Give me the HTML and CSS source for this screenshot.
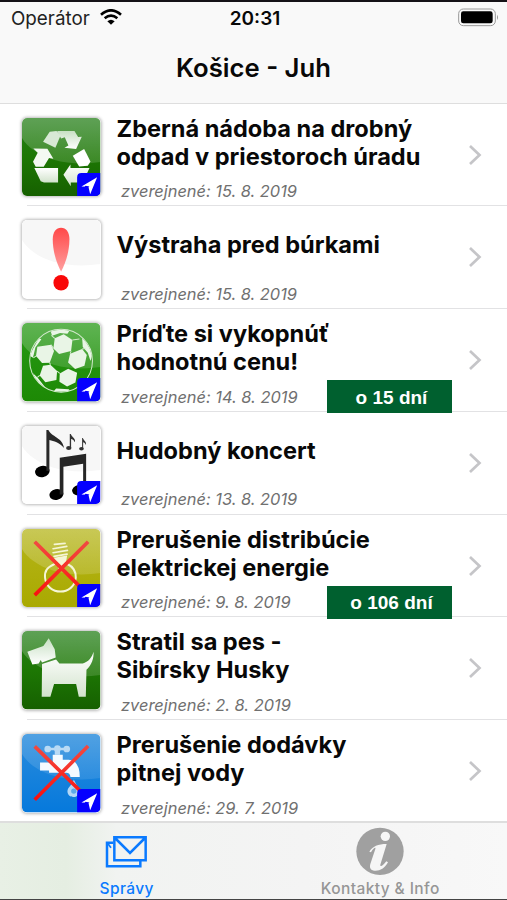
FILE: index.html
```
<!DOCTYPE html>
<html lang="sk">
<head>
<meta charset="utf-8">
<title>Košice - Juh</title>
<link rel="stylesheet" href="styles.css">
</head>
<body>
<svg class="defs" width="0" height="0" aria-hidden="true">
  <defs>
    <linearGradient id="green" x1="0" y1="0" x2="0" y2="1"><stop offset="0" stop-color="#26801a"/><stop offset=".5" stop-color="#1d7704"/><stop offset="1" stop-color="#166000"/></linearGradient>
    <linearGradient id="grass" x1="0" y1="0" x2="0" y2="1"><stop offset="0" stop-color="#279a16"/><stop offset="1" stop-color="#1d8905"/></linearGradient>
    <linearGradient id="olive" x1="0" y1="0" x2="0" y2="1"><stop offset="0" stop-color="#b5b51a"/><stop offset="1" stop-color="#a9a900"/></linearGradient>
    <linearGradient id="blue" x1="0" y1="0" x2="0" y2="1"><stop offset="0" stop-color="#2a8cdc"/><stop offset="1" stop-color="#0679dc"/></linearGradient>
    <linearGradient id="shine" x1="0" y1="0" x2="0" y2="1"><stop offset="0" stop-color="#fff" stop-opacity=".26"/><stop offset="1" stop-color="#fff" stop-opacity=".14"/></linearGradient>
    <linearGradient id="glyph" x1="0" y1="0" x2="0" y2="1"><stop offset="0" stop-color="#c8e0c4"/><stop offset="1" stop-color="#fff"/></linearGradient>
    <linearGradient id="glyph2" x1="0" y1="0" x2="0" y2="1"><stop offset="0" stop-color="#fff"/><stop offset="1" stop-color="#d2e3cc"/></linearGradient>
    <linearGradient id="warn" x1="0" y1="0" x2="0" y2="1"><stop offset="0" stop-color="#ff4848"/><stop offset="1" stop-color="#ffa0a0"/></linearGradient>
    <linearGradient id="cross" gradientUnits="userSpaceOnUse" x1="0" y1="68" x2="0" y2="230"><stop offset="0" stop-color="#f04a42"/><stop offset=".5" stop-color="#f83028"/><stop offset="1" stop-color="#f81010"/></linearGradient>
    <clipPath id="tile"><rect width="235" height="235" rx="15"/></clipPath>
    <clipPath id="ball"><circle cx="153" cy="149" r="93"/></clipPath>
    <path id="gloss" d="M0 0H235V132C190 138 140 138 95 125C45 110 15 85 0 60Z"/>
    <g id="loc">
      <path d="M165 235V178Q165 165 178 165H235V235Z" fill="#0500ff"/>
      <path d="M225 177L178 205L199 206L204 228Z" fill="#fff"/>
      <path d="M202 205L180 217L190 203Z" fill="#0500ff"/>
    </g>
  </defs>
</svg>
<div class="screen">
  <header class="top">
    <div class="status">
      <div class="carrier"><span>Operátor</span>
        <svg width="22" height="16" viewBox="0 0 66 48"><g fill="none" stroke="#000" stroke-width="8"><path d="M3 17Q33 -9 63 17"/><path d="M14 28Q33 12 52 28"/></g><path d="M33 47L22 37Q33 28 44 37Z"/></svg>
      </div>
      <div class="clock">20:31</div>
      <svg class="battery" width="41" height="19" viewBox="0 0 123 57"><rect x="2" y="3" width="110" height="50" rx="14" fill="none" stroke="#999" stroke-width="3"/><rect x="9" y="10" width="95" height="36" rx="7"/><path d="M117 20Q123 28 117 36Z" fill="#999"/></svg>
    </div>
    <h1>Košice - Juh</h1>
  </header>

  <main class="list">
    <article class="row">
      <svg class="icon" viewBox="0 0 235 235"><g clip-path="url(#tile)"><rect width="235" height="235" fill="url(#green)"/><use href="#gloss" fill="url(#shine)"/>
        <g transform="translate(-36 -38)">
          <path d="M99 109L119 79L139 77L152 89L136 127Z" fill="#d8e9d5"/>
          <path d="M141 77H193L204 95L215 94L198 131L163 127L175 120L164 96L153 99Z" fill="url(#glyph)"/>
          <path d="M70 129L112 130L130 160L117 158L101 184H77L69 169L83 142Z" fill="#f4f9f2"/>
          <path d="M188 151L222 131L241 168L233 181L207 183Z" fill="#fff"/>
          <path d="M73 188L83 188L144 188V231H102L92 227Z" fill="url(#glyph2)"/>
          <path d="M160 208L181 177V188H238L221 224L206 231H182V242Z" fill="url(#glyph2)"/>
        </g><use href="#loc"/></g></svg>
      <div class="body"><h2><span>Zberná nádoba na drobný</span><span>odpad v priestoroch úradu</span></h2><p>zverejnené: 15. 8. 2019</p></div>
      <svg class="chev" viewBox="0 0 14 22"><path d="M2 2L11.500 11L2 20"/></svg>
    </article>
    <article class="row">
      <svg class="icon" viewBox="0 0 235 235"><g clip-path="url(#tile)"><rect width="235" height="235" fill="#fff"/><use href="#gloss" fill="#f7f7f7"/>
        <g transform="translate(-36 -30)"><path d="M153 53C168 53 178 66 178 88C178 125 166 160 153 185C140 160 128 125 128 88C128 66 138 53 153 53Z" fill="url(#warn)"/><circle cx="153" cy="218" r="23" fill="#f90808"/></g></g></svg>
      <div class="body"><h2><span>Výstraha pred búrkami</span></h2><p>zverejnené: 15. 8. 2019</p></div>
      <svg class="chev" viewBox="0 0 14 22"><path d="M2 2L11.500 11L2 20"/></svg>
    </article>
    <article class="row">
      <svg class="icon" viewBox="0 0 235 235"><g clip-path="url(#tile)"><rect width="235" height="235" fill="url(#grass)"/><use href="#gloss" fill="url(#shine)"/>
        <g transform="translate(-36 -36)">
          <g fill="#e9f5e6" clip-path="url(#ball)">
            <path d="M134 82L161 70L187 87L183 120L147 129L130 112Z"/>
            <path d="M82 107L123 101L132 120L119 155L96 156L78 135Z"/>
            <path d="M180 128L216 114L230 132L223 164L195 174L174 154Z"/>
            <path d="M99 164L121 161L141 180L139 207L106 213L89 193Z"/>
            <path d="M149 187L174 173L201 185L196 214L171 226L148 212Z"/>
            <path d="M121 58L180 56L172 68L150 66L126 74Z"/>
            <path d="M58 134L86 82L94 85L76 109L69 140Z"/>
            <path d="M216 80L250 120L241 150L233 125L218 108Z"/>
            <path d="M68 186L83 200L104 227L115 241L90 240Z"/>
            <path d="M138 232L176 234L190 250L125 248Z"/>
          </g>
          <g fill="none" stroke="#d3e9cd" stroke-width="3"><circle cx="153" cy="149" r="94"/><path d="M124 73L134 82M187 87L208 84M123 101L130 112M183 120L180 128M119 155L121 161M141 180L149 187M70 140L78 135M89 193L82 199M216 114L226 112"/></g>
        </g><use href="#loc"/></g></svg>
      <div class="body"><h2><span>Príďte si vykopnúť</span><span>hodnotnú cenu!</span></h2><p>zverejnené: 14. 8. 2019</p></div>
      <span class="badge">o 15 dní</span>
      <svg class="chev" viewBox="0 0 14 22"><path d="M2 2L11.500 11L2 20"/></svg>
    </article>
    <article class="row">
      <svg class="icon" viewBox="0 0 235 235"><g clip-path="url(#tile)"><rect width="235" height="235" fill="#fff"/><use href="#gloss" fill="#f7f7f7"/>
        <g transform="translate(-36 -30)">
          <ellipse cx="97" cy="166" rx="22" ry="17" transform="rotate(-12 97 166)"/><ellipse cx="139" cy="235" rx="21" ry="16" transform="rotate(-12 139 235)"/><ellipse cx="207" cy="222" rx="21" ry="16" transform="rotate(-12 207 222)"/>
          <path d="M109 164V42H115C126 64 157 64 162 96C147 78 132 76 118 72V164Z" fill="#282828"/>
          <path d="M149 235V125L228 113V222H219V143L160 152V235Z" fill="#262626"/>
          <g fill="#333"><ellipse cx="176" cy="96" rx="8" ry="6"/><path d="M179 96V54H182C186 64 198 68 194 79C190 70 187 70 183 69V96Z"/><ellipse cx="214" cy="98" rx="7" ry="5"/><path d="M216 98V66H218C222 75 230 77 227 87C224 80 221 80 219 79V98Z"/></g>
        </g><use href="#loc"/></g></svg>
      <div class="body"><h2><span>Hudobný koncert</span></h2><p>zverejnené: 13. 8. 2019</p></div>
      <svg class="chev" viewBox="0 0 14 22"><path d="M2 2L11.500 11L2 20"/></svg>
    </article>
    <article class="row">
      <svg class="icon" viewBox="0 0 235 235"><g clip-path="url(#tile)"><rect width="235" height="235" fill="url(#olive)"/><use href="#gloss" fill="url(#shine)"/>
        <g transform="translate(-36 -30)">
          <g fill="none" stroke="#f5f5d5" stroke-width="5" stroke-linecap="round"><path d="M133 76L165 73M129 89L170 82M129 101L172 94M132 112L171 105"/><path stroke-width="6" d="M133 135C111 145 103 156 105 176C110 231 192 231 197 176C198 156 191 144 171 134"/></g>
          <path d="M132 116L171 109L168 130L158 138V149H144V138L134 132Z" fill="#f5f5d5"/>
          <path d="M74 68L211 204M234 68L74 228" fill="none" stroke="url(#cross)" stroke-width="11"/>
        </g><use href="#loc"/></g></svg>
      <div class="body"><h2><span>Prerušenie distribúcie</span><span>elektrickej energie</span></h2><p>zverejnené: 9. 8. 2019</p></div>
      <span class="badge">o 106 dní</span>
      <svg class="chev" viewBox="0 0 14 22"><path d="M2 2L11.500 11L2 20"/></svg>
    </article>
    <article class="row">
      <svg class="icon" viewBox="0 0 235 235"><g clip-path="url(#tile)"><rect width="235" height="235" fill="url(#green)"/><use href="#gloss" fill="url(#shine)"/>
        <g transform="translate(-36 -37)">
          <path d="M52 99L100 82L116 59L134 92L137 116L96 131L92 124L86 134L67 137Z" fill="url(#glyph)"/>
          <path d="M96 136L138 122L148 134H218C234 130 246 116 250 99C252 117 244 140 229 153L227 234H206L198 196H132L121 234H95Z" fill="url(#glyph2)"/>
        </g></g></svg>
      <div class="body"><h2><span>Stratil sa pes -</span><span>Sibírsky Husky</span></h2><p>zverejnené: 2. 8. 2019</p></div>
      <svg class="chev" viewBox="0 0 14 22"><path d="M2 2L11.500 11L2 20"/></svg>
    </article>
    <article class="row last">
      <svg class="icon" viewBox="0 0 235 235"><g clip-path="url(#tile)"><rect width="235" height="235" fill="url(#blue)"/><use href="#gloss" fill="url(#shine)" opacity=".7"/>
        <g transform="translate(-36 -36)">
          <g fill="#b9daf5"><circle cx="113" cy="81" r="10"/><circle cx="142" cy="80" r="10"/><circle cx="170" cy="81" r="10"/><path d="M110 77H173V85H150V98H134V85H110Z"/></g>
          <path d="M128 98H158V113H176Q209 116 209 165H181Q180 151 167 152H117V145H90V121H128Z" fill="#f5faff"/>
          <path d="M191 172C187 189 172 194 172 209C174 228 200 230 207 213L201 192Z" fill="#b3d7f6"/><circle cx="191" cy="207" r="8" fill="#5baae9"/>
          <path d="M74 73L210 206M234 72L74 233" fill="none" stroke="url(#cross)" stroke-width="11"/>
        </g><use href="#loc"/></g></svg>
      <div class="body"><h2><span>Prerušenie dodávky</span><span>pitnej vody</span></h2><p>zverejnené: 29. 7. 2019</p></div>
      <svg class="chev" viewBox="0 0 14 22"><path d="M2 2L11.500 11L2 20"/></svg>
    </article>
  </main>

  <nav class="tabs">
    <a class="tab active"><svg width="43" height="48" viewBox="0 0 129 144"><g fill="none" stroke="#0a7aff" stroke-width="7.5"><path d="M24 65H6V136H106V117"/><path d="M28 49H122V118H28ZM30 51L75 96L120 51"/><path d="M9 68L18 80" stroke-width="5"/></g></svg><span>Správy</span></a>
    <a class="tab"><svg width="48" height="48" viewBox="0 0 144 144"><circle cx="72" cy="91" r="71" fill="#a0a0a0"/><circle cx="88" cy="46" r="14" fill="#f6f6f6"/><path d="M40 92C50 76 66 69 92 69L73 131C72 139 80 136 91 121L96 124C86 143 71 150 56 149C43 148 40 140 43 129L58 84C60 77 52 81 45 94Z" fill="#f6f6f6"/></svg><span>Kontakty &amp; Info</span></a>
  </nav>
</div>
</body>
</html>
```
FILE: styles.css
```
* { box-sizing: border-box; }
body { margin: 0; background: #fff; font-family: Inter, "Liberation Sans", sans-serif; color: #080808; }
.defs { display: block; height: 0; }
.screen { width: 507px; height: 900px; display: flex; flex-direction: column; border-top: 2px solid #151217; border-bottom: 1px solid #444; overflow: hidden; }
.top { flex: none; height: 101.500px; background: #f9f9f9; border-bottom: 1px solid #dedede; }
.status { height: 32px; display: grid; grid-template-columns: 1fr auto 1fr; align-items: center; padding: 0 8px 0 11px; }
.carrier { display: flex; align-items: center; gap: 10px; font-size: 18.800px; color: #222; }
.carrier svg { margin-top: -2px; }
.clock { font-size: 19px; font-weight: 600; }
.battery { justify-self: end; margin-top: -1px; }
h1 { margin: 19px 0 0; text-align: center; font-size: 25.700px; line-height: 30px; font-weight: 600; }
.list { flex: none; height: 717.500px; overflow: hidden; }
.row { position: relative; display: flex; height: 102.750px; padding: 14px 25px 0 22px; }
.row::after { content: ""; position: absolute; left: 27px; right: 0; bottom: 0; height: 1px; background: #e2e2e4; }
.row.last::after { display: none; }
.icon { flex: none; width: 78.500px; height: 78.500px; border-radius: 5px; box-shadow: 0 0 3px 1px #bcbcbc; }
.body { flex: 1; margin-left: 16px; display: flex; flex-direction: column; }
h2 { margin: -3px 0 0; height: 56px; display: flex; flex-direction: column; justify-content: center; font-size: 23.550px; line-height: 28px; font-weight: 700; white-space: nowrap; }
.body p { margin: 10.500px 0 0 4.500px; font-size: 16.400px; line-height: 20px; font-style: italic; color: #707070; white-space: nowrap; }
.chev { flex: none; width: 14px; height: 22px; margin-top: 26px; fill: none; stroke: #c5c5c8; stroke-width: 2.700; }
.badge { position: absolute; left: 327px; top: 71px; width: 125px; height: 33px; z-index: 1; display: flex; align-items: center; justify-content: center; padding: 2px 0 0 4px; background: #00602f; color: #fff; font: bold 19px "Liberation Sans", sans-serif; }
.tabs { flex: 1; display: flex; border-top: 2px solid #dedede; background: linear-gradient(90deg, #e8f0e5 0, #e5eee2 13%, #f1f3f1 23%, #f4f4f4 60%, #f8f8f8); }
.tab { flex: 1; display: flex; flex-direction: column; align-items: center; font-size: 15.500px; line-height: 18px; letter-spacing: .4px; font-weight: 500; color: #969696; }
.tab svg { flex: none; margin-top: -2px; overflow: visible; }
.tab span { margin-top: 10.500px; }
.tab.active { color: #0a7aff; }
```
